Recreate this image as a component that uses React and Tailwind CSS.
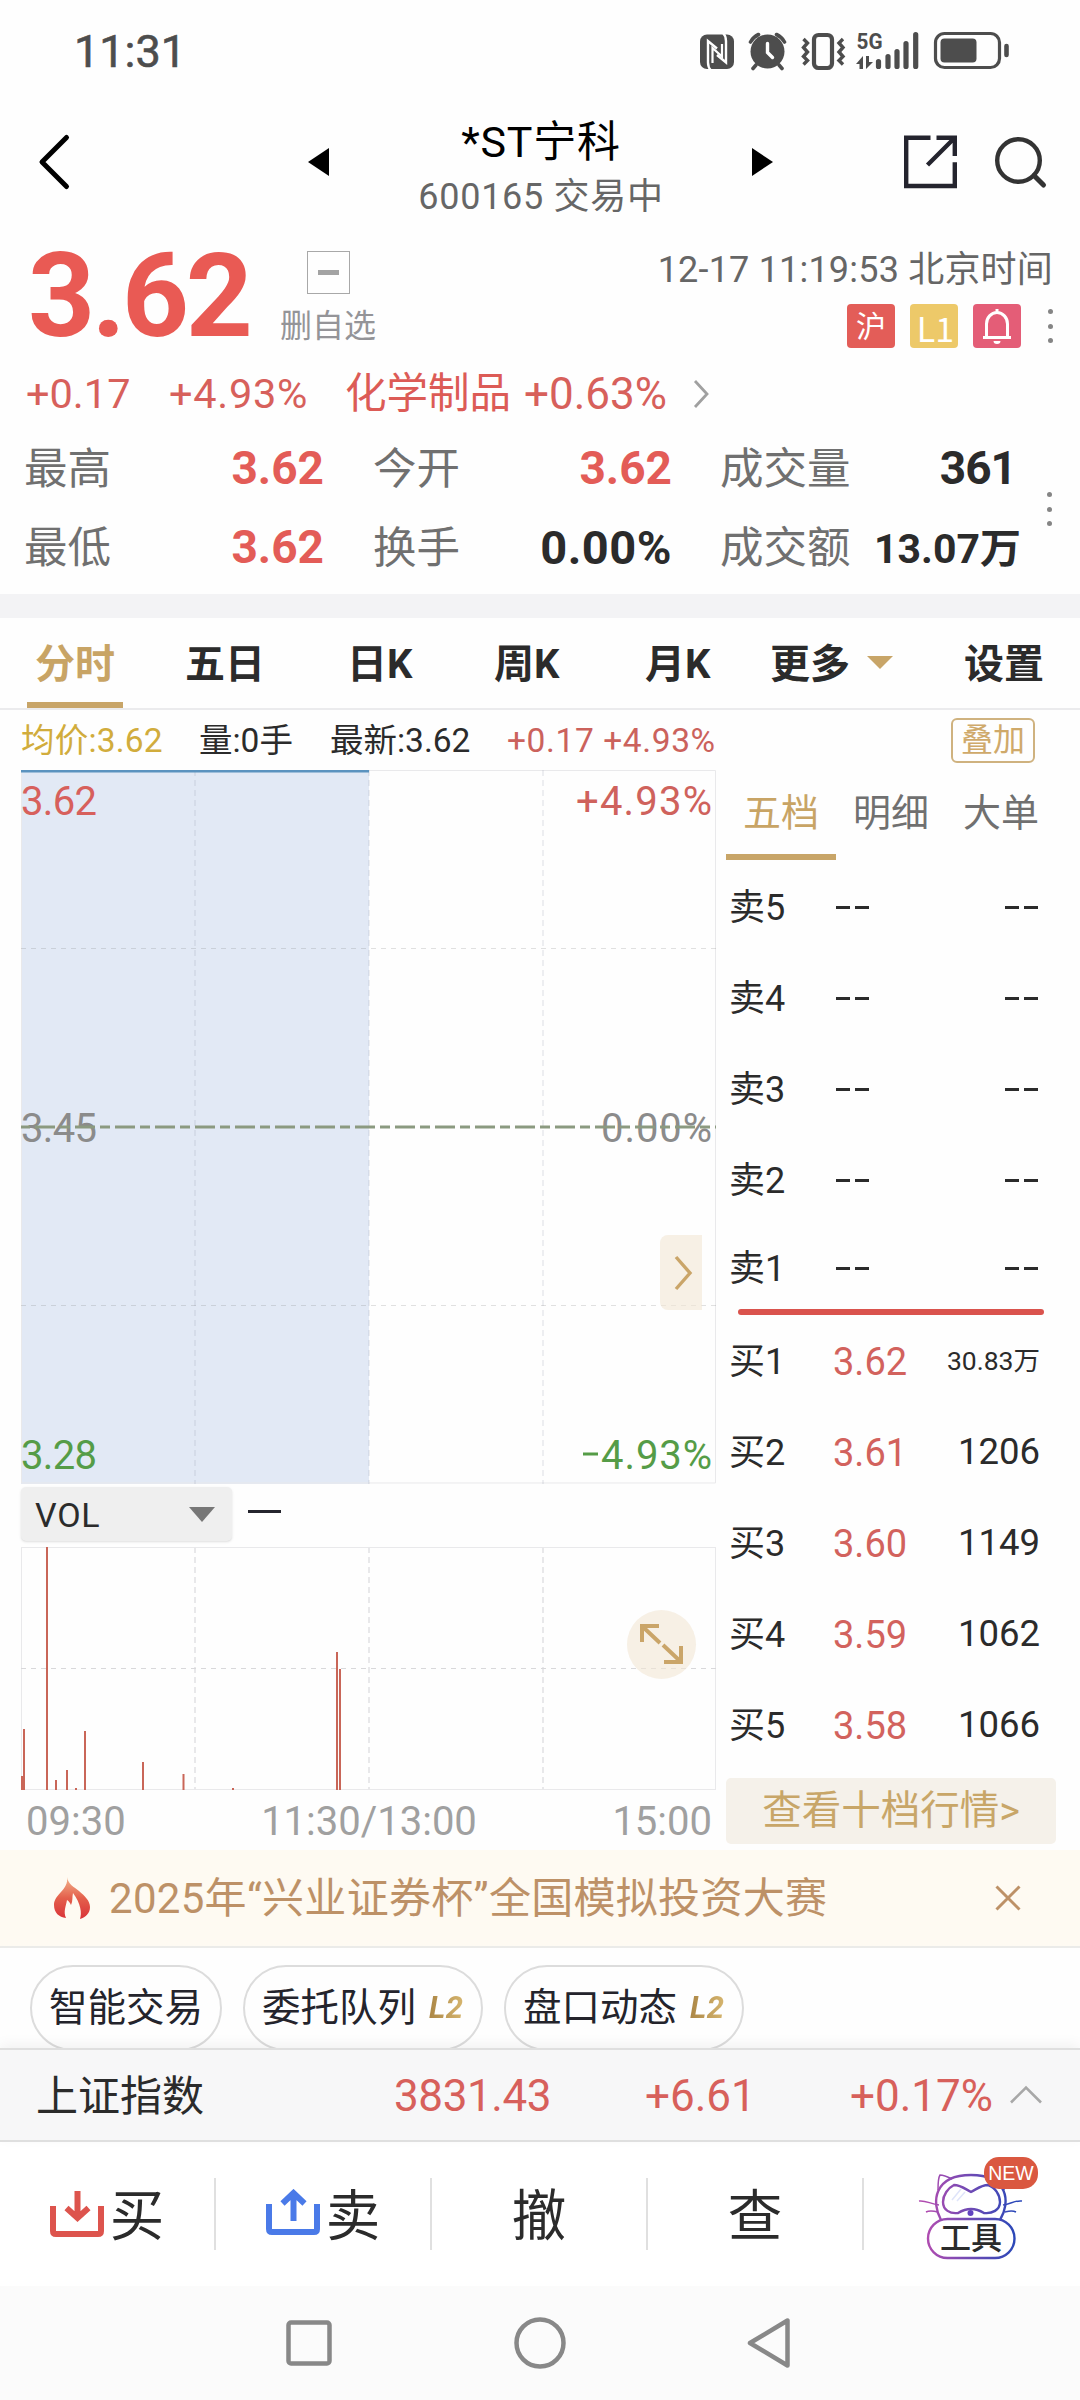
import clsx from 'clsx';

const chartTabs = [
    { label: '五日', className: 'w-[162px]' },
    { label: '日K', className: 'w-[147px]' },
    { label: '周K', className: 'w-[151px]' },
    { label: '月K', className: 'w-[64px]' },
];

const asks = ['卖5', '卖4', '卖3', '卖2', '卖1'];

const bids = [
    { label: '买1', price: '3.62', amount: '30.83万', small: true },
    { label: '买2', price: '3.61', amount: '1206' },
    { label: '买3', price: '3.60', amount: '1149' },
    { label: '买4', price: '3.59', amount: '1062' },
    { label: '买5', price: '3.58', amount: '1066' },
];

// [x, height] inside the 695 x 243 volume chart
const volumeBars = [
    [1, 14], [3, 61], [26, 243], [35, 10], [46, 20], [55, 2], [64, 59],
    [122, 28], [162.5, 16], [212, 2], [316, 138], [319, 121],
];

function Dots() {
    return (
        <div className="flex flex-col gap-[9.5px]">
            <i className="w-[5px] h-[5px] rounded-full bg-[#858585]" />
            <i className="w-[5px] h-[5px] rounded-full bg-[#858585]" />
            <i className="w-[5px] h-[5px] rounded-full bg-[#858585]" />
        </div>
    );
}

function StatusBar() {
    return (
        <div className="h-[102px] pl-[74px] pr-[70px] flex items-center justify-between text-[#4d4d4d]">
            <span className="text-[45px] leading-none [-webkit-text-stroke:0.6px_#4d4d4d]">11:31</span>
            <svg width="310" height="42" viewBox="700 30 310 42" fill="none" stroke="#4d4d4d">
                {/* NFC */}
                <rect x="700" y="34.500" width="34" height="34.500" rx="7" fill="#4d4d4d" stroke="none" />
                <path d="M711 70.500q-3-3-3-8V41l9 7.500M723 33q3 3 3 8v21.500l-9-7.500" stroke="#fff" strokeWidth="2.400" />
                <path d="M712.500 63V48l9.500 8.500V44" stroke="#fff" strokeWidth="2.200" />
                {/* Alarm */}
                <circle cx="767.500" cy="51.500" r="17" fill="#4d4d4d" stroke="none" />
                <path d="M750.500 42a17 17 0 0 1 8-7.500M784.500 42a17 17 0 0 0-8-7.500M756 65l-3 3.500M779 65l3 3.500" strokeWidth="3.600" strokeLinecap="round" />
                <path d="M767.500 43.500v9l5 5" stroke="#fff" strokeWidth="3.400" strokeLinecap="round" />
                {/* Vibrate */}
                <rect x="814" y="35" width="18" height="33" rx="4.500" strokeWidth="4.200" />
                <path d="M803.500 39l4 4-4 4.500 4 4.500-4 4.500 4 4-4 4M843 39l-4 4 4 4.500-4 4.500 4 4.500-4 4 4 4" strokeWidth="3.400" />
                {/* Signal */}
                <text x="856.500" y="49" fontSize="22" fontWeight="700" fill="#4d4d4d" stroke="none" textLength="26" lengthAdjust="spacingAndGlyphs">5G</text>
                <path d="M856 64l7-8v13h-3.500v-5zM873 62l-7 7V56h3v6z" fill="#4d4d4d" stroke="none" />
                <path d="M878.500 61.500v5M888 56.500v10M897 51.500v15M906 43.500v23M915.700 34.500v32" strokeWidth="5.200" strokeLinecap="round" />
                {/* Battery */}
                <rect x="935.500" y="33.500" width="64" height="34" rx="9" strokeWidth="3.200" />
                <rect x="940.500" y="38.500" width="36" height="24" rx="4" fill="#4d4d4d" stroke="none" />
                <path d="M1006.500 46v9" strokeWidth="4.600" strokeLinecap="round" />
            </svg>
        </div>
    );
}

function Header() {
    return (
        <header className="h-[120px] flex items-center">
            <svg className="ml-[36px]" width="36" height="60" fill="none" stroke="#000" strokeWidth="5" strokeLinecap="round" strokeLinejoin="round">
                <path d="M30.500 5.500 6 30l24.500 24.500" />
            </svg>
            <svg className="ml-[236px]" width="22" height="28"><path d="M21 0v28L0 14z" /></svg>
            <div className="w-[422px] pt-[7px] flex flex-col items-center">
                <h1 className="h-[56px] leading-[56px] text-[43px] tracking-[0.800px] text-black">*ST宁科</h1>
                <p className="h-[48px] leading-[54px] text-[36px] tracking-[0.700px] text-[#666]">600165 交易中</p>
            </div>
            <svg width="22" height="28"><path d="M0 0v28L21 14z" /></svg>
            <svg className="ml-[130px]" width="56" height="56" fill="none" stroke="#24242e" strokeWidth="4.400">
                <path d="M26.500 3.700H2.200v48.300h48.600V28.200M32.500 3.700h18.300V22M50.500 4 23.500 31" />
            </svg>
            <svg className="ml-[34px]" width="56" height="56" fill="none" stroke="#333" strokeWidth="4.400">
                <circle cx="24.500" cy="26.500" r="21.300" />
                <path d="M40 41.500l9.500 9.500" strokeWidth="5" strokeLinecap="round" />
            </svg>
        </header>
    );
}

function Badge({ className, children }) {
    return (
        <div className={clsx('w-[48px] h-[44px] rounded-[4px] flex items-center justify-center text-white', className)}>
            {children}
        </div>
    );
}

function Stat({ label, value, red, className, valueClass }) {
    return (
        <div className={clsx('shrink-0 flex items-center justify-between whitespace-nowrap', className)}>
            <span className="text-[43.500px] text-[#707070] pt-[5px]">{label}</span>
            <span className={clsx('font-bold', red ? 'text-[#e35c57]' : 'text-[#2b2b2b]', valueClass || 'text-[46px] pt-[2px]')}>{value}</span>
        </div>
    );
}

function Quote() {
    return (
        <section className="h-[372px] flex flex-col">
            <div className="h-[138px] flex">
                <div className="w-[252px] pl-[28px] leading-[148px] text-[117px] font-bold tracking-[-3.500px] text-[#e95a54]">3.62</div>
                <div className="ml-[27px] w-[98px] flex flex-col items-center">
                    <div className="mt-[29px] w-[43px] h-[43px] border border-[#a8a8a8] flex items-center justify-center">
                        <i className="w-[21px] h-[4.500px] bg-[#a3a3a3]" />
                    </div>
                    <span className="mt-[12px] leading-[40px] text-[32px] text-[#949498]">删自选</span>
                </div>
                <div className="flex-1 pr-[27px]">
                    <p className="mt-[28px] h-[40px] leading-[40px] text-right text-[36px] tracking-[0.200px] text-[#666]">12-17 11:19:53 北京时间</p>
                    <div className="mt-[14px] flex items-center justify-end gap-[15px]">
                        <Badge className="bg-[#e35d58] text-[30px]">沪</Badge>
                        <Badge className="bg-[#edc969] pt-[3px] pl-[3px] text-[34px] font-['Noto_Sans_CJK_SC',sans-serif]">L1</Badge>
                        <Badge className="bg-[#e45d77]">
                            <svg width="32" height="38" fill="none" stroke="#fff" strokeWidth="3">
                                <path d="M2 30.500h28M5.500 30V17a10.500 11.500 0 0 1 21 0v13M16 2v5" />
                                <path d="M12.500 34h7a3.500 3 0 0 1-7 0z" fill="#fff" stroke="none" />
                            </svg>
                        </Badge>
                        <div className="ml-[12px]"><Dots /></div>
                    </div>
                </div>
            </div>

            <div className="h-[68px] flex items-center text-[#d7605b]">
                <span className="ml-[26px] w-[143px] text-[41.500px]">+0.17</span>
                <span className="w-[176px] text-[41.500px] tracking-[0.700px]">+4.93%</span>
                <span className="text-[41.500px] text-[#dc5b56]">化学制品</span>
                <span className="ml-[13px] w-[168px] text-[44px]">+0.63%</span>
                <svg width="20" height="32" fill="none" stroke="#a0a0a0" strokeWidth="2.800"><path d="M3 3l12 13L3 29" /></svg>
            </div>

            <div className="flex leading-none">
                <div className="w-[1015px] pl-[24px]">
                    <div className="h-[78px] flex items-center">
                        <Stat label="最高" value="3.62" red className="w-[300px]" />
                        <Stat label="今开" value="3.62" red className="ml-[49px] w-[299px]" />
                        <Stat label="成交量" value="361" className="ml-[48px] w-[296px]" valueClass="text-[46px] pt-[2px] -tracking-[1px]" />
                    </div>
                    <div className="h-[80px] flex items-center">
                        <Stat label="最低" value="3.62" red className="w-[300px]" />
                        <Stat label="换手" value="0.00%" className="ml-[49px] w-[299px]" valueClass="text-[47px] pt-[2px] tracking-[0.500px]" />
                        <Stat label="成交额" value="13.07万" className="ml-[48px] w-[301px]" valueClass="text-[41px] pt-[7px]" />
                    </div>
                </div>
                <div className="ml-[32px] mt-[64px]"><Dots /></div>
            </div>
        </section>
    );
}

function ChartTabs() {
    return (
        <nav className="h-[92px] border-b-2 border-[#ebebed] flex items-center text-[40px] font-bold text-[#2b2b2b] leading-none">
            <div className="relative ml-[27px] w-[96px] h-full pt-[3px] flex items-center justify-center text-[#c8a465]">
                分时
                <i className="absolute left-0 bottom-0 w-[96px] h-[6px] bg-[#c8a568]" />
            </div>
            <div className="ml-[62px] pt-[3px] flex">
                {chartTabs.map((tab) => (
                    <span key={tab.label} className={clsx('whitespace-nowrap', tab.className)}>{tab.label}</span>
                ))}
            </div>
            <span className="ml-[61px] pt-[3px]">更多</span>
            <svg className="ml-[17px]" width="26" height="14" fill="#c8a568"><path d="M0 0h26L13 13z" /></svg>
            <span className="ml-[71px] pt-[3px]">设置</span>
        </nav>
    );
}

function InfoRow() {
    return (
        <div className="h-[60px] flex items-center text-[33.500px] leading-none text-[#2b2b2b] whitespace-nowrap">
            <span className="ml-[21px] pt-[2px] w-[178px] tracking-[0.200px] text-[#d1ac3c]">均价:3.62</span>
            <span className="w-[131px] pt-[2px]">量:0手</span>
            <span className="w-[177px] pt-[2px]">最新:3.62</span>
            <span className="w-[444px] pt-[2px] tracking-[0.600px] text-[#cb625c]">+0.17 +4.93%</span>
            <span className="w-[84px] h-[45px] border-2 border-[#cfb27f] rounded-[6px] flex items-center justify-center text-[32px] text-[#cfa96a]">叠加</span>
        </div>
    );
}

function PriceChart() {
    return (
        <svg className="block" width="695" height="714" fontSize="40">
            <rect width="348" height="714" fill="#e2e9f5" />
            <path d="M0.500 0V713H694.500V0.500H348" fill="none" stroke="#e9e9eb" />
            <path d="M174 0V714M348 0V714M522 0V714" stroke="#8c96a8" strokeOpacity="0.150" strokeWidth="2" strokeDasharray="6 4" />
            <path d="M0 178.500H695M0 535.500H695" stroke="#777" strokeOpacity="0.220" strokeDasharray="5 5" />
            <path d="M0 1.200H348" stroke="#5b93bf" strokeWidth="2.400" />
            <text x="0" y="45" fill="#d7605c" textLength="76">3.62</text>
            <text x="555" y="45" fill="#cf625c" textLength="136">+4.93%</text>
            <text x="0" y="372" fill="#8b8b8b" textLength="76">3.45</text>
            <text x="580" y="372" fill="#8b8b8b" textLength="111">0.00%</text>
            <path d="M0 357H695" stroke="#8b9a80" strokeWidth="2.800" strokeDasharray="10 5 20 5" strokeDashoffset="1" />
            <text x="0" y="698.500" fill="#559c47" textLength="76">3.28</text>
            <rect x="562" y="682.500" width="15" height="3" fill="#559c47" />
            <text x="580" y="698.500" fill="#559c47" textLength="111">4.93%</text>
            <path d="M681 465h-34a8 8 0 0 0-8 8v59a8 8 0 0 0 8 8h34z" fill="#f2e6d3" fillOpacity="0.600" />
            <path d="M655 487l14 16-14 16" fill="none" stroke="#caa569" strokeWidth="3.400" />
        </svg>
    );
}

function VolumeChart() {
    return (
        <svg className="block" width="695" height="243">
            <rect x="0.500" y="0.500" width="694" height="242" fill="none" stroke="#e9e9eb" />
            <path d="M174 0V243M348 0V243M522 0V243" stroke="#e8e8ea" strokeWidth="2" strokeDasharray="6 4" />
            <path d="M0 121.500H695" stroke="#d8d8da" strokeDasharray="5 5" />
            {volumeBars.map(([x, h]) => (
                <rect key={x} x={x - 1} y={243 - h} width="2" height={h} fill="#c96658" />
            ))}
            <circle cx="640.500" cy="97.500" r="34.500" fill="#f2e6d3" fillOpacity="0.600" />
            <g fill="none" stroke="#caa569" strokeWidth="4">
                <path d="M621 95V79h17M622 80l17 16" />
                <path d="M660 99v16h-17M659 114l-17-16" />
            </g>
        </svg>
    );
}

function ChartColumn() {
    return (
        <div className="ml-[21px] w-[695px]">
            <PriceChart />
            <div className="mt-[3px] h-[60px] flex items-start">
                <div className="w-[211px] h-[54px] pl-[14px] pr-[17px] rounded-[5px] bg-[#efefef] shadow-sm flex items-center justify-between text-[34px] text-[#2b2b2b]">
                    <span className="pt-[2px] tracking-[0.700px]">VOL</span>
                    <svg width="26" height="15" fill="#777"><path d="M0 0h26L13 15z" /></svg>
                </div>
                <i className="ml-[16px] mt-[23px] w-[33px] h-[3px] bg-[#25252d]" />
            </div>
            <VolumeChart />
            <div className="h-[60px] pl-[5px] pr-[4px] pt-[3px] flex justify-between items-center text-[40px] text-[#a0a0a0]">
                <span className="w-[150px]">09:30</span>
                <span>11:30/13:00</span>
                <span className="w-[150px] text-right">15:00</span>
            </div>
        </div>
    );
}

function Dashes() {
    return (
        <span className="flex gap-[5px]">
            <i className="w-[14px] h-[3px] bg-[#2b2b2b]" />
            <i className="w-[14px] h-[3px] bg-[#2b2b2b]" />
        </span>
    );
}

function OrderBook() {
    return (
        <div className="ml-[10px] w-[330px] text-[#2b2b2b] leading-none">
            <div className="relative h-[90px] pb-[4px] flex text-[38px] text-[#707070]">
                <span className="w-[110px] flex items-center justify-center text-[#c8a465]">五档</span>
                <span className="w-[110px] flex items-center justify-center">明细</span>
                <span className="w-[110px] flex items-center justify-center">大单</span>
                <i className="absolute left-0 bottom-0 w-[110px] h-[6px] bg-[#c8a568]" />
            </div>
            <div className="h-[449px] pt-[2px]">
                {asks.map((label, i) => (
                    <div key={label} className={clsx('pl-[3px] pr-[18px] flex items-center text-[36px]', i === 4 ? 'h-[85px]' : 'h-[91px]')}>
                        <span className="w-[107px]">{label}</span>
                        <Dashes />
                        <span className="ml-auto"><Dashes /></span>
                    </div>
                ))}
            </div>
            <div className="ml-[12px] w-[306px] h-[6px] rounded-full bg-[#da534d]" />
            <div className="pt-[1px]">
                {bids.map((bid) => (
                    <div key={bid.label} className="h-[91px] pl-[3px] pr-[16px] flex items-center text-[36px]">
                        <span className="w-[104px] pt-[1px]">{bid.label}</span>
                        <span className="text-[38px] text-[#d2625d]">{bid.price}</span>
                        <span className={clsx('ml-auto', bid.small ? 'text-[26.500px]' : 'text-[36.500px]')}>{bid.amount}</span>
                    </div>
                ))}
            </div>
            <button className="mt-[7px] w-[330px] h-[66px] rounded-[5px] bg-[#f5f1ea] text-[39.500px] text-[#c8a668]">查看十档行情&gt;</button>
        </div>
    );
}

function Banner() {
    return (
        <div className="h-[98px] bg-[#fefaf2] border-b-2 border-[#ebebe9] flex items-center text-[42px] text-[#bd9167] whitespace-nowrap">
            <svg className="ml-[53px]" width="38" height="44" viewBox="0 0 38 44">
                <defs>
                    <linearGradient id="flame" x1="0" y1="0" x2="0" y2="1">
                        <stop offset="0" stopColor="#f2b48c" />
                        <stop offset="0.500" stopColor="#e4604c" />
                        <stop offset="1" stopColor="#d93238" />
                    </linearGradient>
                </defs>
                <path d="M14 1c1 7 7 10 12 14 6 5 11 10 11 16 0 6-4 10-10 12 2-6 1-15-7-26-1 4 0 8-2 12-1-2-2-4-4-5-1 6-4 12-1 18C6 41 1 37 1 29 1 18 16 14 14 1z" fill="url(#flame)" />
            </svg>
            <span className="ml-[18px] tracking-[0.300px]">2025年“兴业证券杯”全国模拟投资大赛</span>
            <svg className="ml-auto mr-[59px]" width="26" height="26" stroke="#bd9167" strokeWidth="3"><path d="M1.500 1.500l23 23M24.500 1.500l-23 23" /></svg>
        </div>
    );
}

function Chip({ label, level, className }) {
    return (
        <span className={clsx('h-[86px] shrink-0 rounded-full border-2 border-[#dcdcdc] pl-[17px] flex items-center text-[38.500px] text-[#24242c] whitespace-nowrap', className)}>
            {label}
            {level && (
                <b className="ml-[13px] pr-[4px] text-[31px] italic tracking-[0.500px] bg-gradient-to-r from-[#ab8645] to-[#dcbc74] bg-clip-text text-transparent">{level}</b>
            )}
        </span>
    );
}

function IndexBar() {
    return (
        <div className="h-[94px] border-y-2 border-[#dfdfdf] bg-[#f7f7f8] flex items-center text-[44px] text-[#d7605b] shadow-[0_-4px_12px_rgba(0,0,0,0.05)] relative">
            <span className="ml-[36px] pt-[2px] w-[358px] text-[42px] text-[#2b2b2b]">上证指数</span>
            <span className="pt-[2px] w-[251px] tracking-[-0.400px]">3831.43</span>
            <span className="pt-[2px] w-[205px]">+6.61</span>
            <span className="pt-[2px] w-[159px]">+0.17%</span>
            <svg width="34" height="20" fill="none" stroke="#a8a8a8" strokeWidth="2.600"><path d="M2 17.500 17 2.500l15 15" /></svg>
        </div>
    );
}

function ToolCat() {
    return (
        <svg width="124" height="106" viewBox="918 2156 124 106" fill="none" strokeWidth="2">
            <defs>
                <linearGradient id="cat" gradientUnits="userSpaceOnUse" x1="928" y1="0" x2="1016" y2="0">
                    <stop offset="0" stopColor="#b04cb0" />
                    <stop offset="1" stopColor="#2b48b8" />
                </linearGradient>
            </defs>
            <g stroke="url(#cat)">
                <path d="M942 2220c-10-18-7-45 30-45s40 27 29 45" strokeWidth="2.400" />
                <path d="M939 2190c0-6 0-12 2-15 4 0 8 2 12 4M1005 2190c0-6 0-12-2-15-4 0-8 2-12 4" strokeWidth="1.500" />
                <path d="M955 2185c7 0 11 4 17 7 6-3 10-7 17-7 7 2 12 10 12 17 0 8-8 12-16 11-5-3-8-4-13-4s-8 1-13 4c-8 1-15-3-15-11 0-7 5-14 11-17z" strokeWidth="2.400" />
                <path d="M920 2201c7-1 11 3 20 4M927 2212c4-2 8-1 12 0M1023 2201c-7-1-11 3-19 4M1017 2212c-4-2-7-1-11 0" strokeWidth="1.500" />
                <rect x="929" y="2219" width="86.500" height="39" rx="19.500" fill="#fff" strokeWidth="2.400" />
            </g>
            <path d="M953 2200l9-11M958 2201l8-9" stroke="#dfe4fa" strokeWidth="1.500" />
            <circle cx="971.500" cy="2213" r="3" fill="#6244c0" />
            <text x="972" y="2249" textAnchor="middle" fontSize="31" fontWeight="500" fill="#2b2b2b">工具</text>
            <rect x="985" y="2157" width="54" height="32" rx="15" fill="#da5840" />
            <text x="1012" y="2180" textAnchor="middle" fontSize="19.500" fill="#fff" fontFamily="Liberation Sans, Arial, sans-serif">NEW</text>
        </svg>
    );
}

function TradeBar() {
    return (
        <div className="h-[144px] bg-white grid grid-cols-5 items-center text-[54.500px] text-[#2b2b2b] leading-none">
            <div className="h-[72px] border-r-2 border-[#e0e0e0] flex items-center justify-center">
                <svg width="54" height="50" fill="none" stroke="#dd544d" strokeWidth="6">
                    <path d="M3 17v25q0 3 3 3h42q3 0 3-3V17M27.500 2v26M16.500 19l11 10 11-10" />
                </svg>
                <span className="ml-[6px] pt-[5px]">买</span>
            </div>
            <div className="h-[72px] border-r-2 border-[#e0e0e0] flex items-center justify-center">
                <svg width="54" height="50" fill="none" stroke="#4a7ae8" strokeWidth="6">
                    <path d="M3 15v25q0 3 3 3h42q3 0 3-3V15M27.500 32V5M16.500 14.500l11-10.500 11 10.500" />
                </svg>
                <span className="ml-[6px] pt-[5px]">卖</span>
            </div>
            <div className="h-[72px] pt-[5px] border-r-2 border-[#e0e0e0] flex items-center justify-center">撤</div>
            <div className="h-[72px] pt-[5px] border-r-2 border-[#e0e0e0] flex items-center justify-center">查</div>
            <div className="pl-[14px] -mt-[10px] flex justify-center"><ToolCat /></div>
        </div>
    );
}

function SystemNav() {
    return (
        <div className="h-[114px] bg-[#fbfbfb] flex items-center justify-center">
            <svg width="520" height="60" fill="none" stroke="#888" strokeWidth="4.500" strokeLinejoin="round">
                <rect x="8.500" y="9.500" width="41" height="41" rx="2.500" />
                <circle cx="260" cy="30" r="23.500" />
                <path d="M507.500 7.500v45L470 30z" />
            </svg>
        </div>
    );
}

export default function App() {
    return (
        <div className="w-[1080px] h-[2400px] overflow-hidden flex flex-col bg-[#fefefe] font-['Roboto','Noto_Sans_CJK_SC',sans-serif]">
            <StatusBar />
            <Header />
            <Quote />
            <div className="h-[24px] bg-[#f3f3f5]" />
            <ChartTabs />
            <InfoRow />
            <div className="h-[1080px] flex">
                <ChartColumn />
                <OrderBook />
            </div>
            <Banner />
            <div className="h-[100px] pt-[17px] pl-[30px] flex gap-[21px] overflow-hidden">
                <Chip label="智能交易" className="w-[192px]" />
                <Chip label="委托队列" level="L2" className="w-[240px]" />
                <Chip label="盘口动态" level="L2" className="w-[240px]" />
            </div>
            <IndexBar />
            <TradeBar />
            <SystemNav />
        </div>
    );
}
